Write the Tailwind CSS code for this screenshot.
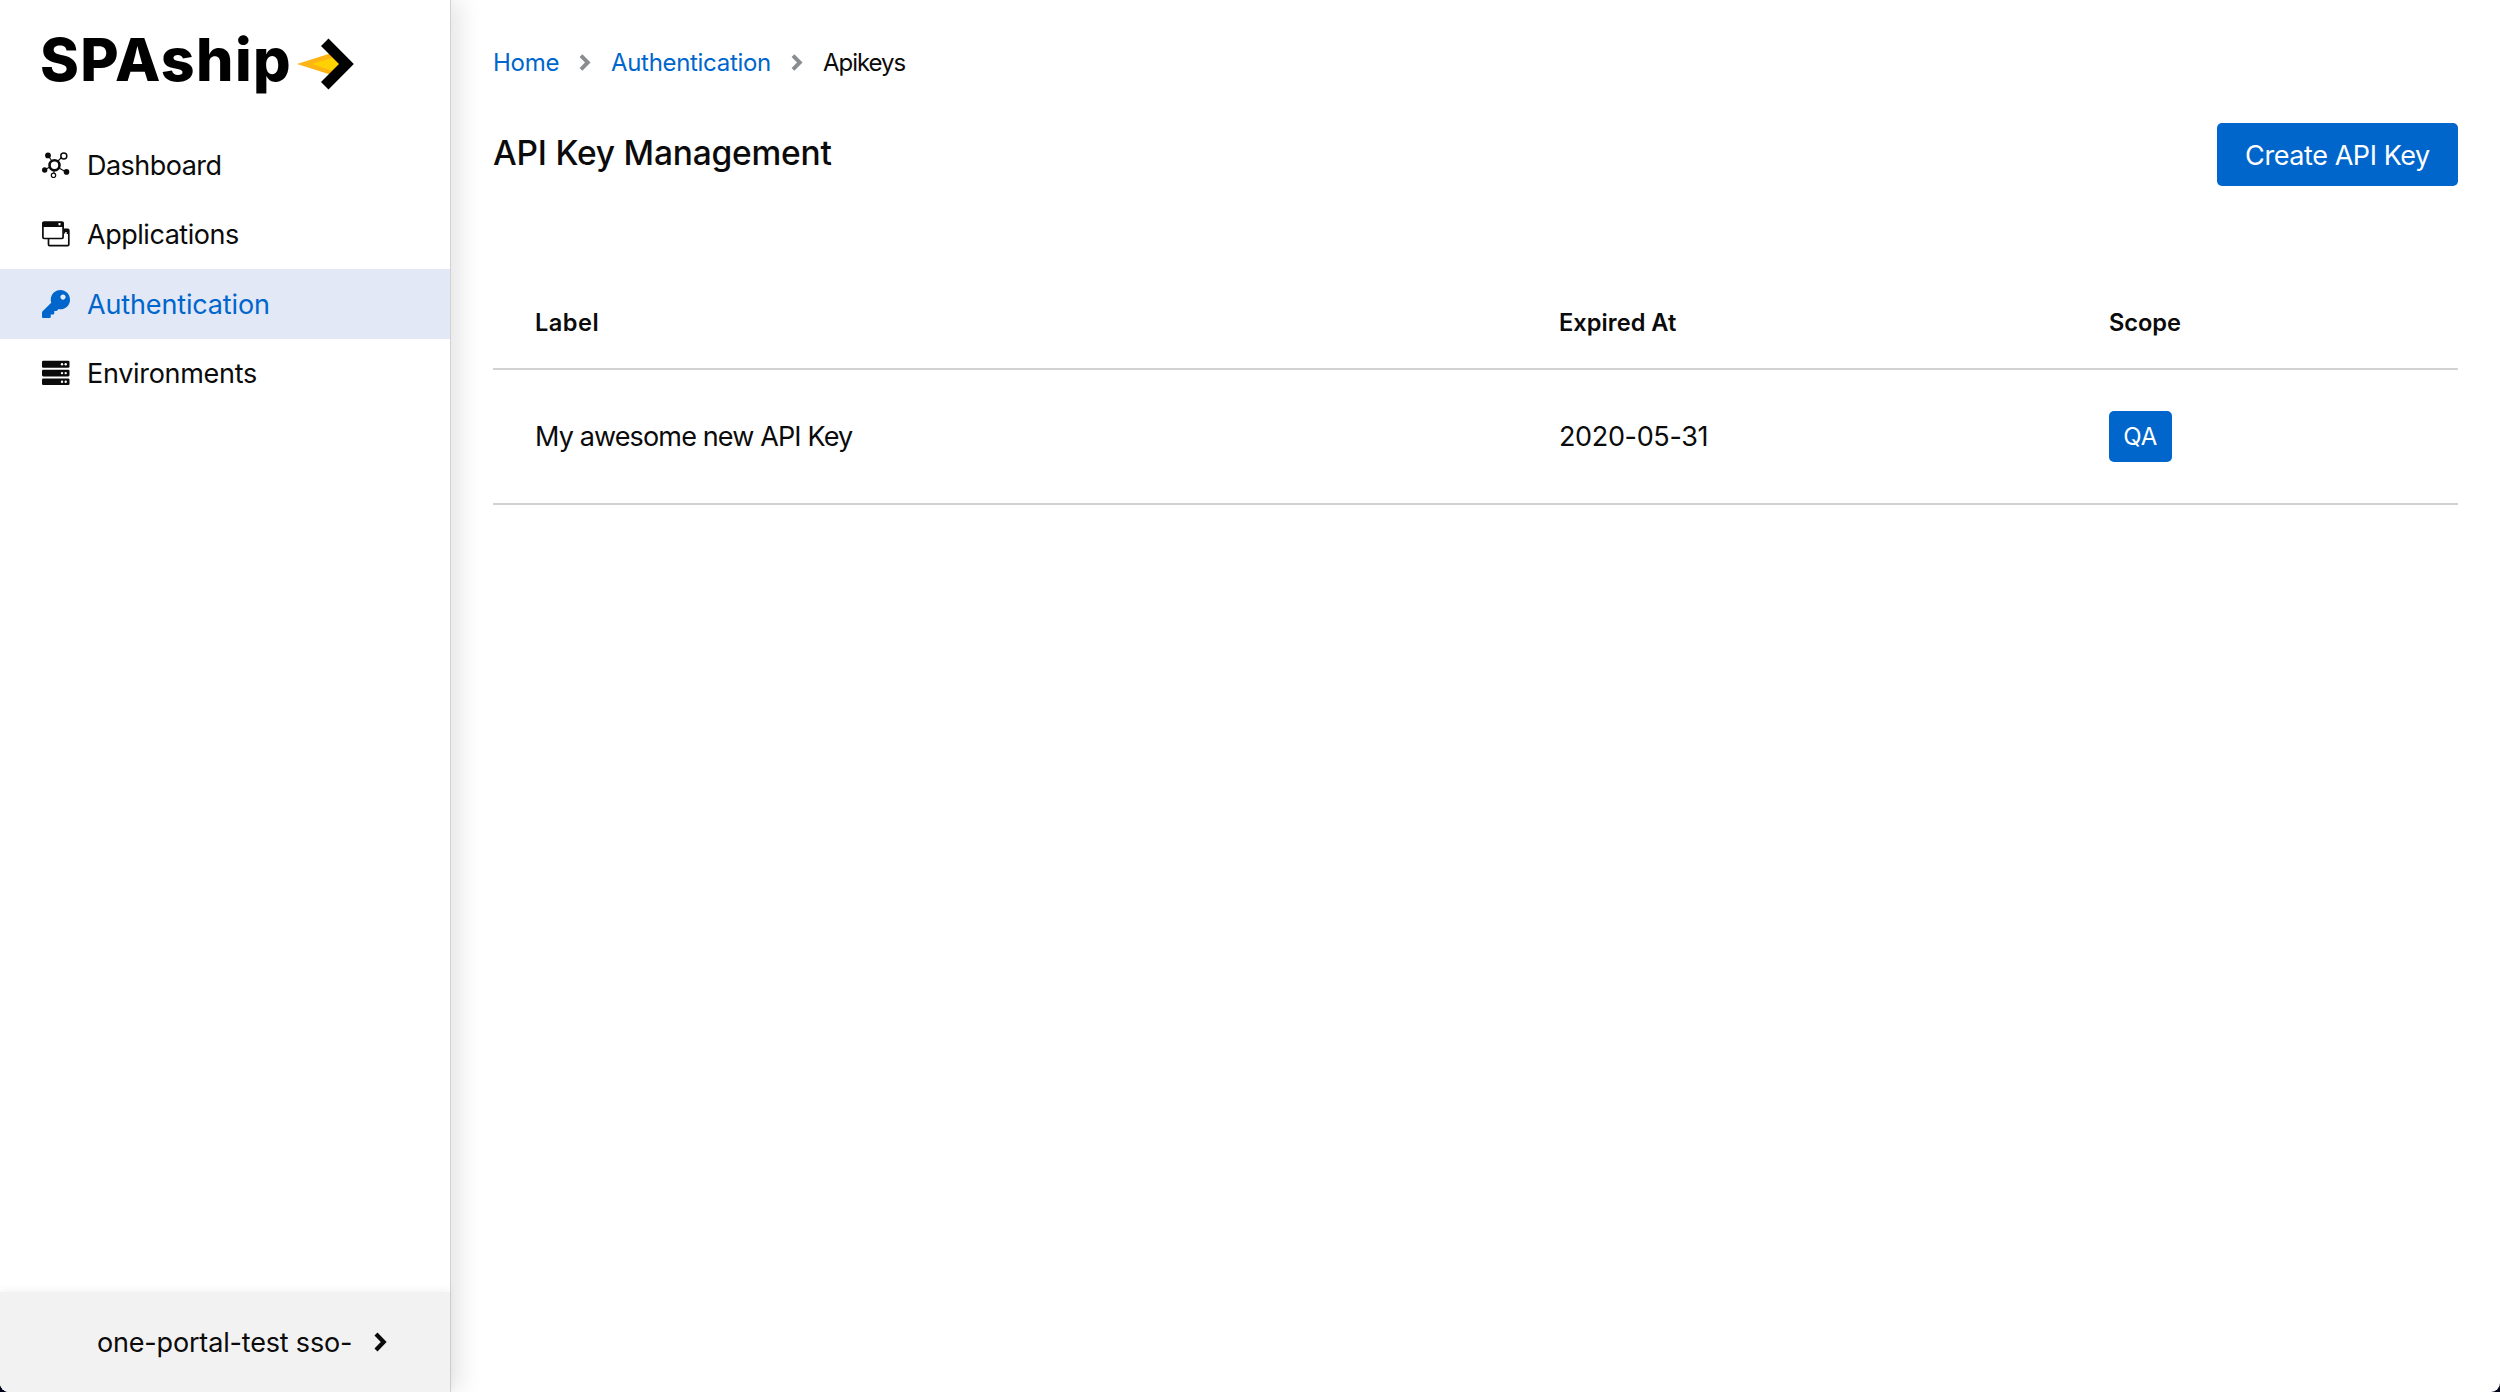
<!DOCTYPE html>
<html lang="en">
<head>
<meta charset="utf-8">
<title>SPAship</title>
<script src="https://cdn.jsdelivr.net/npm/@tailwindcss/browser@4"></script>
</head>
<body class="bg-[#02041a]">
<div class="flex h-[1392px] w-[2500px] overflow-hidden rounded-b-[9px] bg-white font-[Inter,sans-serif] text-[27px] text-[#0b0b0b]">
  <aside class="relative z-10 flex w-[451px] shrink-0 flex-col border-r border-[#d2d2d2] bg-white shadow-[8px_0_24px_0_rgba(3,3,3,0.11)]">
    <div class="flex h-[130px] items-start pl-[40px] text-black">
      <span class="w-[257px] pt-[25px] text-[59px] leading-[70px] font-extrabold tracking-[1.376px]">SPAship</span>
      <svg class="mt-[38px] h-[52px] w-[57px]" viewBox="297 38 57 52">
        <path fill="#fdb515" d="M297 64 330 53.500 342 64 330 74.500z"/>
        <path fill="#ffd100" d="M312 64 333 57.500 342 64 331 70.500z"/>
        <path d="M328.500 38.500 353.800 64 328.500 89.500 321 82 339 64 321 46z"/>
      </svg>
    </div>
    <nav class="flex flex-1 flex-col">
      <a class="flex h-[69.5px] items-center pl-[42px]">
        <svg class="mr-[17px] h-[28px] w-[28px]" viewBox="0 0 28 28" fill="none" stroke="currentColor">
          <path stroke-width="1.100" d="M7 6l3 4M4 18l4-2M17 17l7 4M16 10l4-4M12 20v2"/>
          <circle cx="12.500" cy="14.300" r="5" stroke-width="2.600"/>
          <circle cx="21.800" cy="5" r="3" stroke-width="1.500"/>
          <circle cx="11.500" cy="24.300" r="2.200" stroke-width="1.200"/>
          <g fill="currentColor" stroke="none"><circle cx="6" cy="4.400" r="2.900"/><circle cx="2.700" cy="19" r="2.700"/><circle cx="24.500" cy="20.900" r="2.800"/></g>
        </svg>
        <span class="pt-[2px] tracking-[-0.528px]">Dashboard</span>
      </a>
      <a class="flex h-[69.5px] items-center pl-[42px]">
        <svg class="mr-[17px] h-[28px] w-[28px]" viewBox="0 0 28 28" fill="none" stroke="currentColor" stroke-width="1.700">
          <path d="M6.500 19v5.600q0 1.100 1.100 1.100h18q1.200 0 1.200-1.100V10.500q0-1.100-1.100-1.100H22"/>
          <path fill="currentColor" stroke="none" d="M22 9h5v5h-2.300v-2h-1.500v1.500H22z"/>
          <rect x=".9" y="2" width="20.200" height="16.500" rx="1.200" fill="#fff"/>
          <path fill="currentColor" stroke="none" d="M.5 2h21v5H.5z"/>
          <path fill="#fff" stroke="none" d="M16.500 3h2v2.300h-2z"/>
        </svg>
        <span class="pt-[2px] tracking-[-0.467px]">Applications</span>
      </a>
      <a class="flex h-[69.5px] items-center bg-[#e2e8f5] pl-[42px] text-[#0066cc]">
        <svg class="mr-[17px] h-[28px] w-[28px]" viewBox="0 0 512 512" fill="currentColor"><path d="M512 176.001C512 273.203 433.202 352 336 352c-11.220 0-22.190-1.062-32.827-3.069l-24.012 27.014A23.999 23.999 0 0 1 261.223 384H224v40c0 13.255-10.745 24-24 24h-40v40c0 13.255-10.745 24-24 24H24c-13.255 0-24-10.745-24-24v-78.059c0-6.365 2.529-12.470 7.029-16.971l161.802-161.802C163.108 213.814 160 195.271 160 176 160 78.798 238.797.001 335.999 0 433.488-.001 512 78.511 512 176.001zM336 128c0 26.510 21.490 48 48 48s48-21.490 48-48-21.490-48-48-48-48 21.490-48 48z"/></svg>
        <span class="pt-[2px] tracking-[-0.144px]">Authentication</span>
      </a>
      <a class="flex h-[69.5px] items-center pl-[42px]">
        <svg class="mr-[17px] h-[28px] w-[28px]" viewBox="0 0 28 28" fill="currentColor">
          <rect y="1.800" width="27.500" height="7" rx="1.300"/><rect y="10.800" width="27.500" height="6.600" rx="1.300"/><rect y="19.400" width="27.500" height="6.700" rx="1.300"/>
          <g fill="#fff"><circle cx="20" cy="5.300" r="1.200"/><circle cx="23.700" cy="5.300" r="1.200"/><circle cx="20" cy="14.100" r="1.200"/><circle cx="23.700" cy="14.100" r="1.200"/><circle cx="20" cy="22.800" r="1.200"/><circle cx="23.700" cy="22.800" r="1.200"/></g>
        </svg>
        <span class="pt-[2px] tracking-[-0.3px]">Environments</span>
      </a>
    </nav>
    <div class="flex h-[100px] items-center bg-[#f2f2f2] pl-[97px] shadow-[0_-2px_8px_rgba(3,3,3,0.05)]">
      <span class="w-[277px] pt-[2px] tracking-[-0.178px]">one-portal-test sso-</span>
      <svg class="h-[20px] w-[14px]" viewBox="0 0 14 20" fill="none" stroke="currentColor" stroke-width="4.200"><path d="M2 2l7.700 8-7.700 8"/></svg>
    </div>
  </aside>

  <main class="flex flex-1 flex-col pr-[42px] pl-[42px]">
    <nav class="mt-[42px] flex h-[41px] items-center text-[24px]">
      <a class="w-[86px] pt-px tracking-[-0.25px] text-[#0066cc]">Home</a>
      <svg class="h-[17px] w-[13px]" viewBox="0 0 13 17" fill="none" stroke="#8a8d90" stroke-width="3.900"><path d="M2 1.700L8.800 8.500 2 15.300"/></svg>
      <a class="ml-[19px] w-[180px] pt-px tracking-[-0.316px] text-[#0066cc]">Authentication</a>
      <svg class="h-[17px] w-[13px]" viewBox="0 0 13 17" fill="none" stroke="#8a8d90" stroke-width="3.900"><path d="M2 1.700L8.800 8.500 2 15.300"/></svg>
      <span class="ml-[19px] pt-px tracking-[-1.035px]">Apikeys</span>
    </nav>
    <div class="mt-[40px] flex h-[62.5px] items-center justify-between">
      <h1 class="pb-[2px] text-[33.5px] font-medium tracking-[-0.208px]">API Key Management</h1>
      <button class="h-[62.5px] w-[241px] rounded-[5px] bg-[#0066cc] pt-[3px] tracking-[-0.424px] text-white">Create API Key</button>
    </div>
    <div class="mt-[88.5px]">
      <div class="grid h-[96px] grid-cols-[1024px_550px_1fr] items-center border-b-2 border-[#d2d2d2] pl-[42px] text-[23.6px] font-semibold">
        <span class="pt-[3px] tracking-[0.484px]">Label</span>
        <span class="pt-[3px] tracking-[0.038px]">Expired At</span>
        <span class="pt-[3px] tracking-[-0.044px]">Scope</span>
      </div>
      <div class="grid h-[135px] grid-cols-[1024px_550px_1fr] items-center border-b-2 border-[#d2d2d2] pl-[42px]">
        <span class="pt-px tracking-[-0.863px]">My awesome new API Key</span>
        <span class="pt-px tracking-[-0.35px]">2020-05-31</span>
        <span class="flex h-[50.5px] w-[62.5px] items-center justify-center rounded-[5px] bg-[#0066cc] pt-px text-[24px] text-white">QA</span>
      </div>
    </div>
  </main>
</div>
</body>
</html>
